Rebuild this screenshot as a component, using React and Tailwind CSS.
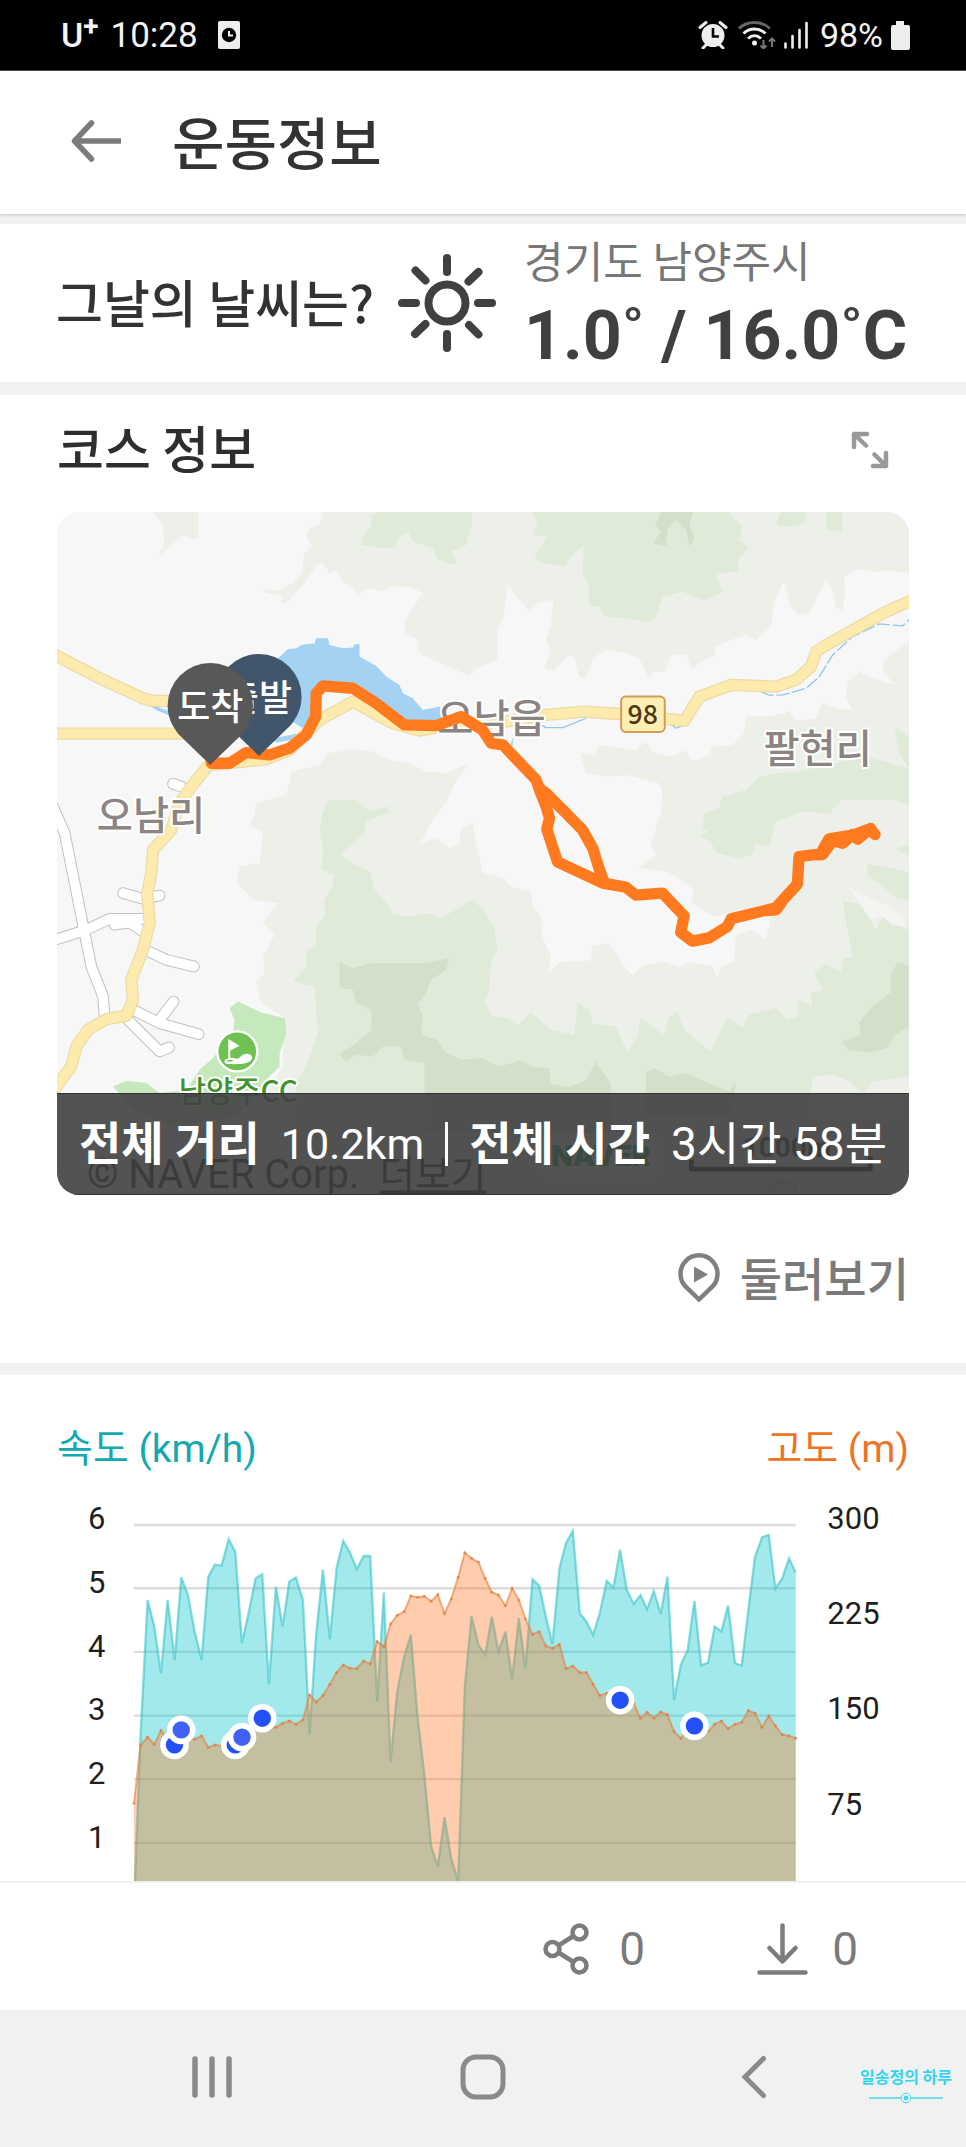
const SPEED = [
  1520, 1000, 600, 680, 820, 600, 780, 532, 585, 695, 780, 530, 494, 497, 418, 455, 730, 635, 535, 523,
  853, 560, 680, 545, 533, 600, 1003, 700, 510, 718, 505, 423, 457, 508, 468, 468, 905, 578, 1086, 875,
  770, 705, 950, 1120, 1340, 1400, 1252, 1375, 1445, 860, 648, 735, 765, 650, 755, 695, 838, 655, 805, 538,
  557, 650, 732, 505, 428, 393, 640, 665, 705, 640, 543, 563, 449, 570, 612, 585, 628, 573, 642, 530,
  900, 795, 750, 603, 796, 788, 680, 695, 617, 790, 797, 630, 470, 412, 405, 565, 537, 475, 518,
];

const ALTITUDE = [
  1210, 1035, 1012, 1033, 992, 1015, 1035, 990, 1015, 1018, 1008, 1043, 1035, 1038, 1040, 1035, 1012, 1000, 975, 955,
  985, 982, 970, 963, 973, 960, 885, 906, 887, 853, 818, 795, 805, 806, 783, 792, 725, 740, 672, 646,
  635, 588, 592, 589, 604, 584, 640, 597, 532, 458, 475, 487, 535, 577, 585, 617, 565, 600, 657, 703,
  695, 738, 745, 734, 806, 798, 818, 818, 852, 887, 880, 885, 901, 905, 910, 955, 937, 955, 936, 944,
  995, 1015, 985, 978, 985, 995, 973, 963, 986, 973, 967, 932, 940, 982, 948, 978, 1004, 1008, 1015,
];

const MARKERS = [6, 7, 15, 16, 19, 72, 83];
const FAINT_MARKERS = [7, 16];

const plotX = (i) => 403 + (i * 1986) / 98;
const toPoints = (values) => values.map((y, i) => `${Math.round(plotX(i))},${y}`).join(" ");
const toArea = (values) => `403,1520 ${toPoints(values)} 2389,1520`;

function StatusBar() {
  return (
    <div className="flex h-[71px] items-center justify-between border-b border-[#555] bg-black pr-14 pl-[61px] font-[Roboto,sans-serif] text-[34px] leading-none text-[#f4f4f4]">
      <div className="flex items-center">
        <span className="flex items-start font-medium">
          <span className="text-[34px]">U</span>
          <span className="text-[28px] leading-[18px] font-bold">+</span>
        </span>
        <span className="ml-3 text-[35px]">10:28</span>
        <svg className="ml-5 h-7 w-[22px]" viewBox="0 0 22 28" fill="none">
          <rect width="22" height="28" rx="2" fill="#eee" />
          <circle cx="11" cy="14" r="7.2" fill="#000" />
          <path d="M11 10v4.5h4" stroke="#eee" strokeWidth="2" />
        </svg>
      </div>
      <div className="flex items-center">
        <svg className="h-7 w-[30px]" viewBox="0 0 30 28" fill="none">
          <circle cx="15" cy="14.5" r="11.5" fill="#eee" />
          <path d="M2 6.5l6-5M28 6.5l-6-5M5 27l4-4M25 27l-4-4" stroke="#eee" strokeWidth="3" strokeLinecap="round" />
          <path d="M15 7v8.5h6" stroke="#000" strokeWidth="2.6" />
        </svg>
        <svg className="ml-2.5 h-7 w-[38px]" viewBox="0 0 38 28" fill="none" strokeWidth="2.8">
          <path d="M1 7.500C9 -.5 24-.5 32 7.500" stroke="#666" />
          <path d="M5.500 12.500c6-6 16-6 22 0M10 17.500c4-3.800 9-3.800 13 0" stroke="#eee" />
          <circle cx="16.500" cy="22" r="2.500" fill="#eee" />
          <path d="M25.500 19v8M22.500 24.500l3 3 3-3M34 26v-8M31 20.500l3-3 3 3" stroke="#777" strokeWidth="2" />
        </svg>
        <svg className="ml-2 h-7 w-6" viewBox="0 0 24 28" stroke="#eee" strokeWidth="2.6" strokeLinecap="round">
          <path d="M1.500 26.500v-4M8.500 26.500V15M15.500 26.500V9M22.500 26.500V2" />
        </svg>
        <span className="ml-3">98%</span>
        <svg className="ml-2 h-[29px] w-[19px]" viewBox="0 0 19 29" fill="#eee">
          <path d="M5 0h8v4h4a2 2 0 012 2v21a2 2 0 01-2 2H2a2 2 0 01-2-2V6a2 2 0 012-2h3z" />
        </svg>
      </div>
    </div>
  );
}

function Header() {
  return (
    <header className="relative z-10 flex h-[143px] items-center bg-white pb-1 pl-[71px] shadow-[0_1px_3px_rgba(0,0,0,0.2)]">
      <button type="button" aria-label="뒤로">
        <svg className="h-[42px] w-[51px]" viewBox="0 0 51 42" fill="none" stroke="#7b7b7b" strokeWidth="5.500">
          <path d="M50 21H4" />
          <path d="M20.500 3L3.500 21l17 18" strokeLinecap="round" strokeLinejoin="round" />
        </svg>
      </button>
      <h1 className="ml-[50px] text-[57px] leading-none font-medium text-[#333]">운동정보</h1>
    </header>
  );
}

function Weather() {
  return (
    <section className="flex h-[158px] items-center bg-white pr-14 pl-14">
      <h2 className="pb-1 text-[51px] leading-none font-medium text-[#333]">그날의 날씨는?</h2>
      <svg className="ml-6 size-[98px] shrink-0" viewBox="0 0 98 98" fill="none" stroke="#404040" strokeWidth="8" strokeLinecap="round">
        <circle cx="49" cy="49" r="18.500" />
        <path d="M49 4v14M49 80v14M4 49h14M80 49h14M17.500 16.500l10 10M70.500 27.500l10-9.500M17 80l10.500-10M71 71l9.500 9.500" />
      </svg>
      <div className="ml-7 flex flex-col whitespace-nowrap">
        <span className="text-[43px] leading-[66px] text-[#777]">경기도 남양주시</span>
        <span className="font-[Roboto,sans-serif] text-[68px] leading-[88px] font-bold text-[#404040]">1.0˚ / 16.0˚C</span>
      </div>
    </section>
  );
}

function Pin({ x, y, fill, label }) {
  return (
    <g transform={`translate(${x} ${y})`}>
      <path d="M0 178L-96 85C-114 62-128 36-128 0a128 128 0 01256 0c0 36-14 62-32 85z" fill={fill} />
      <text y="42" textAnchor="middle" fontSize="108" fontWeight="500" fill="#fff">
        {label}
      </text>
    </g>
  );
}

const YELLOW_ROADS = [
  "M160 762L300 835 430 895 460 903 700 903",
  "M160 1001H600",
  "M640 1080L575 1160 540 1210 515 1290 460 1350 455 1420 443 1480 450 1570 430 1650 395 1740 400 1800 380 1848 320 1858 265 1890 230 1940 215 2000 160 2075",
  "M635 1095L800 1078 870 1050 960 960 1060 905 1180 970 1260 992 1380 970 1519 965 1640 945 1755 935 1870 943 2055 963 2100 890 2195 855 2330 860 2390 840 2435 800 2450 755 2490 730 2650 640 2740 600",
];

const WHITE_ROADS = [
  "M160 1220L195 1300 225 1450 255 1600 275 1700 310 1790 315 1850",
  "M160 1622L260 1590 330 1557H440",
  "M345 1575L390 1568 435 1598",
  "M370 1480L430 1497 480 1487",
  "M440 1652L500 1680 583 1700",
  "M400 1830L480 1870 597 1903",
  "M480 1860L522 1805",
  "M385 1860L480 1955 508 1943",
  "M520 1152L545 1160",
];

const ROUTE =
  "M635 1090H690L740 1058 810 1065 870 1045 920 1005 948 950 950 880 970 858 1060 865 1130 910 1215 975 1310 977 1385 950 1449 990 1475 1030 1510 1035 1610 1140 1620 1170 1640 1220 1650 1255 1642 1288 1674 1386 1810 1450 1879 1462 1909 1486 1989 1480 2054 1548 2044 1598 2079 1624 2129 1614 2184 1580 2195 1557 2329 1524 2394 1453 2399 1370 2464 1362 2489 1317 2559 1306 2614 1286 2627 1304M2430 1366L2470 1364 2500 1322 2530 1330 2560 1304 2575 1318 2614 1286M1620 1165L1640 1180 1700 1240 1749 1290 1780 1345 1800 1410 1815 1450M2300 1532L2330 1530 2345 1510";

function CourseMap() {
  return (
    <svg className="block h-auto w-full" viewBox="172 336 2557 2051" role="img" aria-label="코스 지도" strokeLinejoin="round">
      <rect x="172" y="336" width="2557" height="2051" fill="#f7f7f7" />
      <g fill="#ecf0e9">
        <path d="M460 336L480 360 490 380 495 430 475 470 510 440 550 405 585 420 597 410V336z" />
        <path d="M970 336L960 375 930 385 922 410 938 440 915 460 905 520 880 550 840 570 810 572 785 562 800 580 845 585 848 612 870 600 895 570 915 550 935 520 950 495 968 488 990 520 1010 510 1030 545 1060 560 1075 590 1095 570 1120 565 1145 575 1170 560 1235 562 1270 580 1235 630 1215 670 1215 700 1255 720 1260 760 1300 780 1350 800 1410 830 1430 805 1494 780 1494 690 1514 640 1524 555 1589 635 1619 605 1661 600 1654 680 1639 720 1654 755 1634 805 1664 812 1704 768 1724 770 1739 830 1759 838 1779 775 1819 750 1879 760 1919 775 1949 835 1964 815 1999 815 2014 765 2059 762 2079 810 2099 788 2149 765 2149 740 2194 720 2239 705 2269 720 2314 680 2324 610 2354 540 2374 620 2394 645 2429 640 2449 600 2479 540 2504 580 2509 620 2529 635 2539 570 2534 530 2569 508 2629 515 2669 512 2729 520V336z" />
        <path d="M2729 725L2654 780 2649 815 2689 855 2619 835 2579 815 2544 850 2539 890 2559 930 2519 925 2469 910 2449 955 2389 962 2369 935 2309 950 2239 950 2234 1000 2199 1035 2139 1040 2129 1065 2079 1085 2059 1050 2019 1070 1964 1060 1939 1025 1909 1050 1799 1035 1784 1065 1744 1060 1759 1120 1829 1130 1879 1125 1979 1150 1989 1180 1984 1240 1954 1332 1969 1367 1919 1403 2009 1418 2084 1469 2074 1504 2139 1550 2249 1525 2319 1535 2299 1620 2259 1590 2209 1606 2204 1687 2169 1697 2152 1732 2139 1697 2069 1687 2039 1702 1994 1685 1929 1697 1899 1725 1869 1697 1849 1656 1829 1631 1779 1636 1774 1682 1679 1687 1649 1717 1654 1667 1629 1616 1624 1545 1599 1525 1594 1474 1539 1464 1509 1433 1449 1418 1430 1330 1420 1270 1385 1285 1380 1330 1350 1345 1310 1315 1262 1330 1300 1260 1345 1200 1365 1150 1410 1090 1340 1120 1280 1115 1230 1090 1170 1080 1120 1055 1060 1048 985 1060 960 1095 875 1115 870 1150 860 1185 770 1210 765 1240 750 1275 790 1300 780 1390 720 1400 712 1450 760 1500 835 1510 790 1570 825 1605 790 1670 795 1720 770 1745 785 1810 850 1850 850 2000 780 2120 780 2387H2729z" />
      </g>
      <g fill="#e0ead9">
        <path d="M1135 336L1115 345 1115 380 1095 400 1085 435 1150 445 1185 440 1195 415 1225 395 1240 425 1300 445 1310 475 1350 492 1375 488 1355 455 1400 435 1420 360 1415 336z" />
        <path d="M1597 336L1614 375 1599 405 1644 410 1604 470 1629 490 1699 498 1711 470 1754 435 1749 520 1769 560 1769 615 1799 620 1819 650 1879 655 1939 668 1969 655 1989 590 2049 575 2099 595 2119 600 2169 575 2149 520 2219 515 2214 480 2249 445 2219 420 2229 375 2194 350V336z" />
        <path d="M2345 336L2329 375 2370 380 2415 370 2420 336zM2481 336V390L2529 395V336zM2685 980L2729 1010V1105L2700 1060z" />
        <path d="M2109 1290L2114 1240 2159 1225 2169 1190 2239 1170 2279 1130 2329 1120 2399 1115 2509 1090 2600 1070 2729 1105V1215L2689 1200 2529 1200 2490 1240 2409 1235 2329 1265 2309 1340 2269 1332 2260 1365 2219 1377 2149 1357 2134 1325 2099 1306 2139 1286z" />
        <path d="M2604 1393L2669 1403 2729 1418V1504L2689 1494 2639 1448 2604 1428zM2690 1345L2729 1335V1370z" />
        <path d="M985 1200L1070 1200 1110 1235 1165 1220 1168 1238 1100 1265 1095 1300 1060 1330 1020 1365 1065 1395 1110 1415 1125 1470 1165 1515 1180 1545 1240 1550 1290 1540 1320 1555 1370 1530 1415 1500 1449 1525 1464 1550 1484 1580 1494 1646 1475 1687 1469 1768 1454 1808 1479 1849 1524 1854 1554 1877 1594 1839 1654 1890 1724 1905 1734 1808 1769 1829 1779 1870 1849 1880 1884 1955 1914 1910 1924 1854 1994 1905 2009 1849 2034 1834 2054 1890 2134 1955 2184 1849 2229 1885 2249 1844 2329 1824 2364 1859 2394 1849 2394 1798 2439 1819 2434 1778 2469 1773 2444 1717 2479 1692 2524 1717 2534 1672 2561 1677 2529 1504 2589 1514 2629 1590 2649 1550 2714 1585 2729 1590V2387H860L890 2050 920 2000 955 1900 945 1760 880 1745 920 1700 920 1655 950 1630 950 1580 975 1550 975 1500 1000 1460 1000 1425 965 1410 970 1350 960 1290 970 1240z" />
      </g>
      <path d="M2540 1455L2600 1490 2660 1515 2710 1550 2718 1580 2680 1575 2645 1548 2615 1560z" fill="#f4f5f3" />
      <g fill="#d2e0c9">
        <path d="M1985 336L1968 375 1985 395 1960 430 2000 438 2005 385 2030 360 2060 390 2070 440 2085 415 2070 375 2080 336z" />
        <path d="M1020 1685L1060 1705 1110 1690 1270 1690 1350 1675 1340 1710 1290 1745 1280 1780 1255 1810 1270 1850 1265 1905 1310 1920 1340 1960 1385 1980 1449 1975 1499 2001 1564 1981 1599 2001 1649 2006 1654 2052 1709 2062 1759 2042 1789 1986 1834 2052 1839 2200H1275V1990L1215 1980 1205 1940 1150 1940 1120 1970 1070 1965 1040 1985 1020 1965 1070 1930 1115 1890 1115 1830 1070 1810 1060 1770 1020 1765z" />
        <path d="M1939 2150V2020L1965 2005 2009 2030 2059 2020 2109 2042 2190 2075 2209 2045 2200 2150z" />
        <path d="M2729 1697L2694 1687 2674 1727 2674 1778 2619 1819 2579 1869 2584 1905 2529 1925 2544 1950 2609 1958 2664 1945 2689 1905 2729 1880z" />
      </g>
      <path d="M2434 2080L2440 2030 2500 2025 2550 2045 2590 2080 2620 2045 2729 2030V2160H2434z" fill="#ecf0e9" />
      <path d="M690 1825L715 1805 785 1838 855 1855 860 1900 840 1960 840 2000 800 2040 780 2090 700 2150 520 2180 400 2130 340 2060 380 2043 440 2050 480 2080 560 2070 600 2010 640 1975 700 1900 705 1860z" fill="#c5e8bc" />

      <g fill="#a4d2f3">
        <path d="M835 775L865 748 890 745 905 735 945 730 950 715H985L990 735 1030 745 1060 743 1065 733H1080V770L1130 798 1160 830 1200 855 1210 880 1240 895 1270 930 1320 920 1340 960 1200 970 1050 870 960 850 935 960 910 985 870 960 835 900z" />
        <path d="M430 905L540 945V960L470 930zM820 1015L900 1000 890 1018 830 1028zM1530 1040L1542 1010 1538 1055z" />
      </g>
      <g fill="none" stroke="#8fc7ef" strokeWidth="4">
        <path d="M2285 875L2310 886 2350 885 2420 865 2460 830 2500 765 2560 710 2640 672 2710 678 2740 648" strokeDasharray="40 8" />
        <path d="M1625 975L1640 983H1690L1760 955M2010 970L2030 985 2050 978" />
      </g>

      <g fill="none" strokeLinecap="round">
        {WHITE_ROADS.map((d) => (
          <path key={d} d={d} stroke="#c0c0c0" strokeWidth="35" />
        ))}
        {WHITE_ROADS.map((d) => (
          <path key={d} d={d} stroke="#fff" strokeWidth="29" />
        ))}
        {YELLOW_ROADS.map((d) => (
          <path key={d} d={d} stroke="#ecd9a6" strokeWidth="37" />
        ))}
        {YELLOW_ROADS.map((d) => (
          <path key={d} d={d} stroke="#fcebac" strokeWidth="30" />
        ))}
      </g>

      <g fontSize="118" fontWeight="500" fill="#8c8482" stroke="#fff" strokeWidth="12" paintOrder="stroke" textAnchor="middle">
        <text x="454" y="1289">오남리</text>
        <text x="1476" y="1000">오남읍</text>
        <text x="2455" y="1090">팔현리</text>
        <text x="716" y="2108" fontSize="89" fill="#3f9430">
          남양주CC
        </text>
      </g>

      <circle cx="713" cy="1955" r="60" fill="#6fc151" stroke="#fff" strokeWidth="7" />
      <path d="M686 1918L720 1938 692 1952V1975C705 1970 712 1984 722 1972 735 1955 762 1962 757 1978 750 1995 710 1994 685 1993 670 1990 672 1978 686 1976z" fill="#fff" />
      <path d="M684 1983H698" stroke="#6fc151" strokeWidth="4" strokeLinecap="round" />

      <rect x="1865" y="890" width="131" height="106" rx="14" fill="#fdeeb2" stroke="#d39a5b" strokeWidth="6" />
      <text x="1930" y="973" textAnchor="middle" fontSize="80" fontWeight="500" fill="#503712">
        98
      </text>

      <path d={ROUTE} fill="none" stroke="#ff7a1f" strokeWidth="34" strokeLinecap="round" />
      <Pin x={778} y={890} fill="#42566b" label="출발" />
      <Pin x={632} y={917} fill="#585858" label="도착" />

      <rect x="1609" y="2200" width="381" height="136" rx="60" fill="#fff" />
      <text x="1655" y="2298" fontFamily="Inter, sans-serif" fontSize="84" fontWeight="900" fill="#00a04a">
        NAVER
      </text>
      <text x="262" y="2366" fontFamily="Roboto, 'Noto Sans CJK KR', sans-serif" fontSize="120" fill="#111">
        © NAVER Corp.
      </text>
      <text x="1140" y="2366" fontSize="116" fill="#111" textDecoration="underline">
        더보기
      </text>
      <text x="2230" y="2272" fontFamily="Roboto, sans-serif" fontSize="84" fontWeight="700" fill="#222">
        1000m
      </text>
      <path d="M2076 2280V2308H2613V2270" fill="none" stroke="#000" strokeWidth="14" />
      <circle cx="2350" cy="2385" r="42" fill="none" stroke="#d9c7a0" strokeWidth="16" />
    </svg>
  );
}

function Course() {
  return (
    <section className="mt-[13px] bg-white px-[57px] pb-[57px]">
      <div className="flex h-[117px] items-center justify-between pr-5 pb-2">
        <h2 className="pb-1 text-[51px] leading-none font-medium text-[#2e2e2e]">코스 정보</h2>
        <button type="button" aria-label="지도 확대">
          <svg className="size-[38px]" viewBox="0 0 38 38" fill="none" stroke="#999" strokeWidth="4.500" strokeLinecap="round" strokeLinejoin="round">
            <path d="M3 16V3h13M3 3l12 11.500M35 22v13H22M35 35L23.500 23.500" />
          </svg>
        </button>
      </div>
      <div className="relative overflow-hidden rounded-[22px]">
        <CourseMap />
        <div className="absolute inset-x-0 bottom-0 flex h-[102px] items-center justify-between border-y border-[#333] bg-[#404040]/90 px-[22px] font-[Roboto,'Noto_Sans_CJK_KR',sans-serif] text-[46px] leading-none whitespace-nowrap text-white">
          <span className="font-bold">전체 거리</span>
          <span className="text-[43px]">10.2km</span>
          <span className="h-11 w-[3px] bg-white" />
          <span className="font-bold">전체 시간</span>
          <span>3시간 58분</span>
        </div>
      </div>
      <div className="mt-[54px] flex h-[57px] items-center justify-end">
        <button type="button" className="flex items-center gap-5 text-[46px] leading-none font-medium text-[#7a7a7a]">
          <svg className="h-[50px] w-[42px]" viewBox="0 0 42 50" fill="none">
            <path d="M21 46.500L8.500 34.500A18.500 18.500 0 1133.500 34.500z" stroke="#808080" strokeWidth="4.500" />
            <path d="M16 13.500v16l14-8z" fill="#808080" />
          </svg>
          <span className="pb-1">둘러보기</span>
        </button>
      </div>
    </section>
  );
}

function Chart() {
  return (
    <section className="mt-3 bg-white px-[57px] pt-[46px]">
      <div className="flex h-14 items-center justify-between font-[Roboto,'Noto_Sans_CJK_KR',sans-serif] text-[39px] leading-none">
        <h2 className="text-[#14a9b0]">속도 (km/h)</h2>
        <h2 className="text-[#ec7424]">고도 (m)</h2>
      </div>
      <svg className="block h-auto w-full" viewBox="172 231 2557 1212" role="img" aria-label="속도와 고도 그래프">
        <g stroke="#dcdcdc" strokeWidth="7">
          {[375, 565, 756, 947, 1138, 1329].map((y) => (
            <path key={y} d={`M403 ${y}H2389`} />
          ))}
        </g>
        <polygon points={toArea(SPEED)} fill="#04c3c9" fillOpacity="0.37" />
        <polyline points={toPoints(SPEED)} fill="none" stroke="#2cc0c4" strokeOpacity="0.55" strokeWidth="7" />
        <polygon points={toArea(ALTITUDE)} fill="#ff7824" fillOpacity="0.37" />
        <polyline points={toPoints(ALTITUDE)} fill="none" stroke="#e87f3c" strokeOpacity="0.6" strokeWidth="6" />
        {ALTITUDE.map((y, i) => (
          <circle key={i} cx={plotX(i)} cy={y} r="4.500" fill="#e07a3c" fillOpacity="0.7" />
        ))}
        {MARKERS.map((i) => (
          <g key={i}>
            <circle cx={plotX(i)} cy={ALTITUDE[i]} r="35" fill="#eef4ff" stroke="#fff" strokeWidth="16" />
            <circle cx={plotX(i)} cy={ALTITUDE[i]} r="26" fill={FAINT_MARKERS.includes(i) ? "#4161f5" : "#2450fa"} />
          </g>
        ))}
        <g fontFamily="Roboto, sans-serif" fontSize="93" fill="#1f1f1f">
          {[6, 5, 4, 3, 2, 1].map((n, i) => (
            <text key={n} x="317" y={388 + i * 191} textAnchor="end">
              {n}
            </text>
          ))}
          {[300, 225, 150, 75].map((n, i) => (
            <text key={n} x="2484" y={386 + i * 286}>
              {n}
            </text>
          ))}
        </g>
      </svg>
    </section>
  );
}

function ActionBar() {
  return (
    <div className="flex h-[129px] items-center justify-end gap-28 border-t-2 border-[#eff0f0] bg-white pt-1 pr-[108px] font-[Roboto,sans-serif] text-[46px] leading-none text-[#7a7a7a]">
      <button type="button" aria-label="공유 0" className="flex items-center gap-[30px]">
        <svg className="h-[52px] w-[46px]" viewBox="0 0 46 52" fill="none" stroke="#7c7c7c" strokeWidth="4.500">
          <circle cx="9.500" cy="26" r="7" />
          <circle cx="36.500" cy="9.500" r="7" />
          <circle cx="36.500" cy="42.500" r="7" />
          <path d="M15.500 22.500l15-9.500M15.500 29.500l15 9.500" />
        </svg>
        <span>0</span>
      </button>
      <button type="button" aria-label="내려받기 0" className="flex items-center gap-6">
        <svg className="h-[52px] w-[51px]" viewBox="0 0 51 52" fill="none" stroke="#7c7c7c" strokeWidth="4.500" strokeLinecap="round" strokeLinejoin="round">
          <path d="M25.500 2.500V38M12.500 25l13 13.500L38.500 25M2.500 49.500h46" />
        </svg>
        <span>0</span>
      </button>
    </div>
  );
}

function NavBar() {
  return (
    <nav className="relative grid h-[137px] grid-cols-3 items-center bg-[#f1f1f1] px-[77px] pb-1">
      <button type="button" aria-label="최근 앱" className="flex justify-center">
        <svg className="h-[44px] w-[42px]" viewBox="0 0 42 44" stroke="#8a8a8a" strokeWidth="5.500" strokeLinecap="round">
          <path d="M4 4v36M21 4v36M38 4v36" />
        </svg>
      </button>
      <button type="button" aria-label="홈" className="flex justify-center">
        <svg className="size-[46px]" viewBox="0 0 46 46" fill="none" stroke="#8a8a8a" strokeWidth="5">
          <rect x="3" y="3" width="40" height="40" rx="13" />
        </svg>
      </button>
      <button type="button" aria-label="이전" className="flex justify-center">
        <svg className="h-[44px] w-[26px]" viewBox="0 0 26 44" fill="none" stroke="#8a8a8a" strokeWidth="5" strokeLinecap="round">
          <path d="M22.500 3.500L4 22l18.500 18.500" />
        </svg>
      </button>
      <div className="absolute right-3.5 bottom-[43px] flex flex-col items-center text-[16px] leading-[24px] font-bold text-[#30d5f2]">
        <span>일송정의 하루</span>
        <svg className="mt-1 h-3 w-[74px]" viewBox="0 0 74 12" fill="none" stroke="#43daf3">
          <path d="M0 6h32M42 6h32" strokeWidth="1.500" />
          <circle cx="37" cy="6" r="4.800" />
          <circle cx="37" cy="6" r="2" fill="#30d5f2" />
        </svg>
      </div>
    </nav>
  );
}

export default function App() {
  return (
    <main className="min-h-screen bg-[#f1f2f4] font-['Noto_Sans_CJK_KR',sans-serif]">
      <StatusBar />
      <Header />
      <div className="mt-2.5">
        <Weather />
      </div>
      <Course />
      <Chart />
      <ActionBar />
      <NavBar />
    </main>
  );
}
